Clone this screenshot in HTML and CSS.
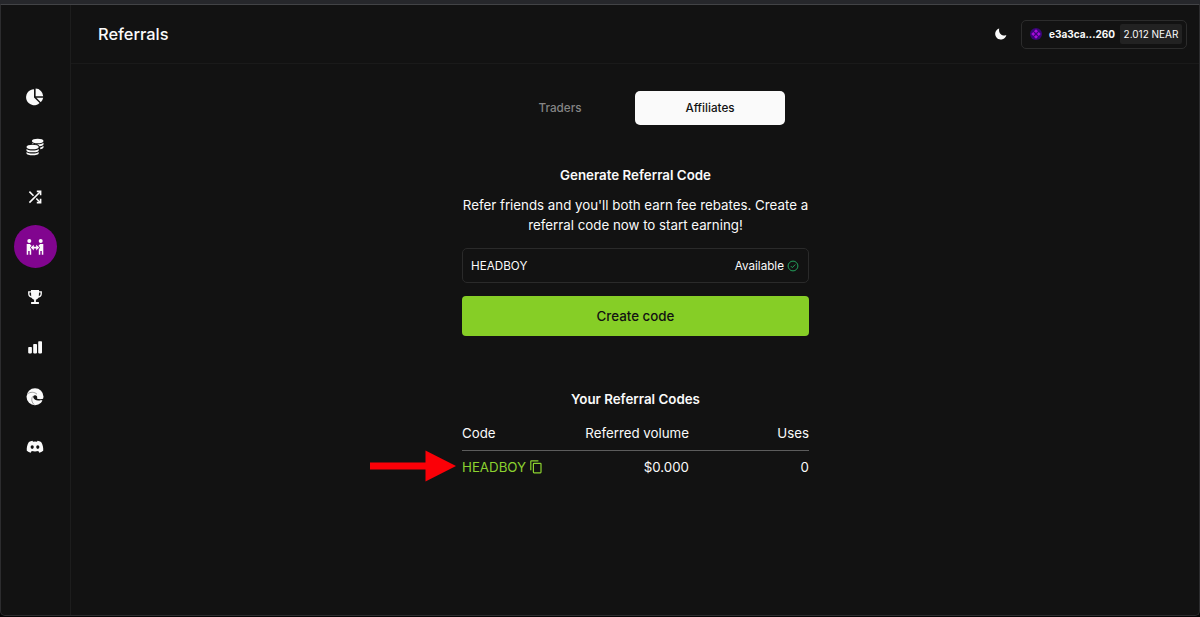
FILE: index.html
```html
<!DOCTYPE html>
<html lang="en">

<head>
    <meta charset="UTF-8" />
    <meta name="viewport" content="width=device-width, initial-scale=1.0" />
    <title>Referrals</title>
    <link rel="stylesheet" href="styles.css">
</head>

<body>
    <div class="topbar"></div>
    <div class="app">
        <nav class="sidebar">
            <a class="nav-item">
                <svg viewBox="0 0 18 18"><path d="M8 1.2V9.4L13.6 15A8 8 0 1 1 8 1.2Z"/><path d="M9.6 .6A7.8 7.8 0 0 1 17.2 8.2H9.6Z"/><path d="M10.4 9.8H17.2A8 8 0 0 1 14.8 14.2Z"/></svg>
            </a>
            <a class="nav-item">
                <svg viewBox="0 0 18 18"><ellipse cx="11.7" cy="3" rx="5.8" ry="2.3"/><path d="M17.5 4.8V6.2C17.5 7.3 15.8 8 13.6 8.2 12.6 6.5 9.6 5.7 6.4 5.8 6 5.5 5.9 5.1 5.9 4.8 8.5 6.8 14.9 6.8 17.5 4.8Z"/><path d="M17.5 7.8V9.2C17.5 10.2 16.2 10.9 14.2 11.2V9.4C15.5 9.2 16.7 8.6 17.5 7.8Z"/><ellipse cx="6.6" cy="9" rx="6.1" ry="2.3"/><path d="M.5 10.9C3.2 12.9 10 12.9 12.7 10.9V12.4C12.7 15 .5 15 .5 12.4Z"/><path d="M.5 13.9C3.2 15.9 10 15.9 12.7 13.9V15.2C12.7 18 .5 18 .5 15.2Z"/></svg>
            </a>
            <a class="nav-item">
                <svg class="stroke" viewBox="0 0 18 18"><path d="M3.4 14.6 14 4M3.4 3.6 7.5 7.7M10.3 10.5 14 14.2"/><path d="M10.8 3.4H14.6V7.2M10.8 14.6H14.6V10.8"/></svg>
            </a>
            <a class="nav-item active">
                <svg viewBox="0 0 18 18"><circle cx="3.3" cy="3.1" r="2"/><circle cx="14.7" cy="3.1" r="2"/><path d="M.7 6H3.9L5.5 7.8 4 9.6 5.2 11.4V16.8H3.7V12.9H2.2V16.8H.7Z"/><path d="M17.3 6H14.1L12.5 7.8 14 9.6 12.8 11.4V16.8H14.3V12.9H15.8V16.8H17.3Z"/><path d="M4.7 9.6 7.8 6.8V8.8H10.2V6.8L13.3 9.6 10.2 12.4V10.4H7.8V12.4Z"/></svg>
            </a>
            <a class="nav-item">
                <svg viewBox="0 0 18 18"><path d="M5 2H13V3.3H15.9V5.6C15.9 8 14.5 9.5 12.4 9.7 11.7 10.8 10.8 11.4 9.9 11.6V13.9H12.9V15.9H5.1V13.9H8.1V11.6C7.2 11.4 6.3 10.8 5.6 9.7 3.5 9.5 2.1 8 2.1 5.6V3.3H5ZM3.5 4.6V5.7C3.5 7 4.1 7.8 5.2 8.2L5 4.6ZM14.5 4.6H13L12.8 8.2C13.9 7.8 14.5 7 14.5 5.7Z" fill-rule="evenodd"/></svg>
            </a>
            <a class="nav-item">
                <svg viewBox="0 0 18 18"><rect x="2.2" y="9" width="3.7" height="6.4" rx=".8"/><rect x="7.2" y="6" width="3.8" height="9.4" rx=".8"/><rect x="12.2" y="3.2" width="3.8" height="12.2" rx=".8"/></svg>
            </a>
            <a class="nav-item">
                <svg viewBox="0 0 18 18"><circle cx="9" cy="8.8" r="8.5"/><path class="cut" d="M9.4 7.2C7.6 7 6.9 8.3 7.3 9.6 8.2 12.6 12 13.2 15.2 12L18 13.4V10.6C15.5 11.5 11.4 11.4 11 10.3 11.6 9.2 11.1 7.5 9.4 7.2Z"/><path class="cut-line" d="M1.3 6.2C4.2 3.4 8.7 3.9 11 6.2M6.6 8.4C5 11.3 5.8 14.8 8.6 17"/></svg>
            </a>
            <a class="nav-item">
                <svg viewBox="0 0 18 18"><path d="M6.5 2.8 7 3.7Q9 3.4 11 3.7L11.5 2.8Q13.5 3.1 15.1 4C16.8 6.7 17.5 9.5 17.2 12.8Q15.3 14.3 13.3 14.8L12.3 13.1Q9 14 5.7 13.1L4.7 14.8Q2.7 14.3.8 12.8C.5 9.5 1.2 6.7 2.9 4Q4.5 3.1 6.5 2.8ZM6.2 7.3A1.6 1.8 0 1 0 6.2 10.9 1.6 1.8 0 1 0 6.2 7.3ZM11.8 7.3A1.6 1.8 0 1 0 11.8 10.9 1.6 1.8 0 1 0 11.8 7.3Z" fill-rule="evenodd"/></svg>
            </a>
        </nav>

        <div class="content">
            <header class="header">
                <h1>Referrals</h1>
                <div class="header-right">
                    <svg class="moon" viewBox="0 0 12 12"><path d="M4.2.4C3.3 4.8 6.4 8.2 11.4 7.3A5.7 5.7 0 1 1 4.2.4Z"/></svg>
                    <div class="wallet">
                        <svg class="avatar" viewBox="0 0 12 12"><circle cx="6" cy="6" r="6" fill="#3a0578"/><path d="M6 1.3 8 3.3 6 5 4 3.3ZM6 7 8 8.7 6 10.7 4 8.7ZM1.3 6 3.3 4 5 6 3.3 8ZM7 6 8.7 4 10.7 6 8.7 8Z" fill="#a80cd8"/></svg>
                        <span class="address">e3a3ca...260</span>
                        <span class="balance">2.012 NEAR</span>
                    </div>
                </div>
            </header>

            <main class="main">
                <div class="tabs">
                    <button class="tab">Traders</button>
                    <button class="tab selected">Affiliates</button>
                </div>

                <section class="generate">
                    <h2>Generate Referral Code</h2>
                    <p>Refer friends and you'll both earn fee rebates. Create a<br>referral code now to start earning!</p>
                    <div class="code-input">
                        <span>HEADBOY</span>
                        <span class="status">Available
                            <svg viewBox="0 0 12 12"><circle cx="6" cy="6" r="4.9"/><path d="M3.8 6.1 5.3 7.6 8.3 4.5"/></svg>
                        </span>
                    </div>
                    <button class="create">Create code</button>
                </section>

                <section class="codes">
                    <h2>Your Referral Codes</h2>
                    <div class="row head">
                        <span>Code</span>
                        <span>Referred volume</span>
                        <span>Uses</span>
                    </div>
                    <div class="row">
                        <span class="code">HEADBOY
                            <svg class="copy" viewBox="0 0 12 14"><path d="M.8 10.2V1.4Q.8.8 1.4.8H8.4"/><rect x="3.4" y="3.4" width="7.6" height="9.4" rx=".7"/></svg>
                        </span>
                        <span>$0.000</span>
                        <span>0</span>
                    </div>
                    <svg class="arrow" viewBox="0 0 86 32"><path d="M0 12.5H55.5V.5L86 16 55.5 31.5V19.5H0Z"/></svg>
                </section>
            </main>
        </div>
    </div>
</body>

</html>
```
FILE: styles.css
```css
* {
    box-sizing: border-box;
}

body {
    margin: 0;
    height: 617px;
    overflow: hidden;
    background-color: #050505;
    color: #fafafa;
    font-family: Inter, sans-serif;
    font-size: 13.3px;
}

h1,
h2,
p {
    margin: 0;
}

button {
    border: none;
    padding: 0;
    font-family: inherit;
}

svg {
    display: block;
    fill: currentColor;
}

.topbar {
    height: 4px;
    background-color: #26272b;
}

.app {
    display: flex;
    height: 612px;
    background-color: #121212;
    border: 1px solid #2c2c2e;
    border-top-color: #424346;
    border-radius: 0 0 5px 5px;
}

.sidebar {
    width: 70px;
    padding: 70px 1px 0 0;
    border-right: 1px solid #1d1d1d;
    display: flex;
    flex-direction: column;
    align-items: center;
    gap: 7px;
}

.nav-item {
    width: 43px;
    height: 43px;
    border-radius: 50%;
    display: flex;
    align-items: center;
    justify-content: center;
}

.nav-item svg {
    width: 18px;
    height: 18px;
}

.nav-item.active {
    background-color: #81058f;
}

.nav-item .stroke {
    fill: none;
    stroke: currentColor;
    stroke-width: 1.6;
}

.cut {
    fill: #121212;
}

.cut-line {
    fill: none;
    stroke: #777;
    stroke-width: 0.7;
}

.content {
    flex: 1;
}

.header {
    height: 59px;
    padding: 0 12px 0 27px;
    border-bottom: 1px solid #1a1a1a;
    display: flex;
    align-items: center;
    justify-content: space-between;
}

h1 {
    font-size: 16.4px;
    font-weight: 450;
}

.header-right {
    display: flex;
    align-items: center;
    gap: 14px;
}

.moon {
    width: 12px;
    height: 12px;
}

.wallet {
    width: 166px;
    height: 29px;
    padding: 0 4px 0 8px;
    border: 1px solid #2c2c2c;
    border-radius: 5px;
    display: flex;
    align-items: center;
}

.avatar {
    width: 12px;
    height: 12px;
    margin-right: 7px;
}

.address {
    font-size: 10px;
    font-weight: 700;
}

.balance {
    margin-left: auto;
    width: 62px;
    height: 20px;
    line-height: 20px;
    text-align: center;
    white-space: nowrap;
    font-size: 10px;
    background-color: #222;
    border-radius: 2px;
}

.main {
    width: 347px;
    margin: 27px 0 0 391px;
}

.tabs {
    display: flex;
    width: 300px;
    margin-left: 23px;
}

.tab {
    width: 150px;
    height: 34px;
    border-radius: 5px;
    background: none;
    color: #858585;
    font-size: 11.7px;
    font-weight: 500;
}

.tab.selected {
    background-color: #fafafa;
    color: #121212;
}

h2 {
    font-size: 13.33px;
    font-weight: 600;
    line-height: 20px;
    text-align: center;
}

.generate {
    margin-top: 40px;
}

.generate p {
    margin-top: 10px;
    line-height: 20px;
    text-align: center;
    white-space: nowrap;
}

.code-input {
    height: 35px;
    margin-top: 13px;
    padding: 0 9px 0 8px;
    border: 1px solid #2a2a2a;
    border-radius: 5px;
    display: flex;
    align-items: center;
    justify-content: space-between;
    font-size: 11.7px;
}

.status {
    display: flex;
    align-items: center;
    gap: 3px;
}

.status svg {
    width: 12px;
    height: 12px;
    fill: none;
    stroke: #23a15c;
}

.create {
    display: block;
    width: 100%;
    height: 40px;
    margin-top: 13px;
    border-radius: 4px;
    background-color: #86ce26;
    color: #121212;
    font-size: 13.33px;
    font-weight: 500;
}

.codes {
    position: relative;
    margin-top: 53px;
}

.row {
    display: grid;
    grid-template-columns: 107px 120px 120px;
    align-items: center;
    height: 32px;
    text-align: right;
}

.row span:first-child {
    text-align: left;
}

.row.head {
    height: 35px;
    margin-top: 7px;
    padding-bottom: 1px;
    border-bottom: 1px solid #5c5c5c;
}

.code {
    display: flex;
    align-items: center;
    gap: 4px;
    color: #8bd12f;
}

.copy {
    width: 12px;
    height: 14px;
    fill: none;
    stroke: currentColor;
    stroke-width: 1.2;
}

.arrow {
    position: absolute;
    left: -92px;
    top: 61px;
    width: 86px;
    height: 32px;
    fill: #fb0007;
}
```
